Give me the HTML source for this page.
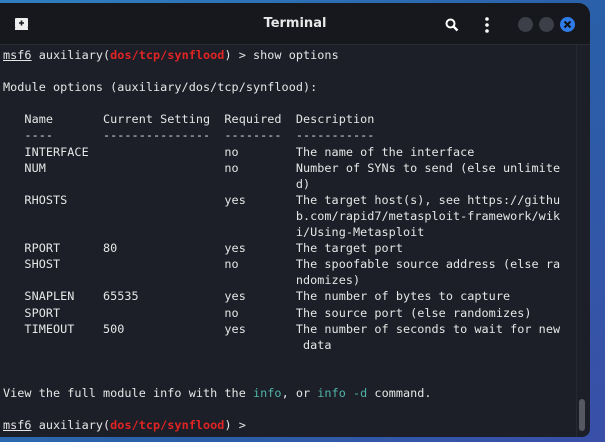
<!DOCTYPE html><html><head><style>
body{margin:0;width:605px;height:442px;overflow:hidden;background:linear-gradient(135deg,#2f7fc0,#2a5fa8 60%,#3a4fa8);font-family:"DejaVu Sans Mono","Liberation Mono",monospace;}
.win{position:absolute;left:0;top:3px;width:590px;height:434px;background:#1c1f28;border-radius:0 12px 8px 0;overflow:hidden}
.tb{position:absolute;left:0;top:0;width:590px;height:41px;background:#17181d;border-bottom:1px solid #2a2c33}
.title{position:absolute;left:0;width:590px;top:13px;text-align:center;color:#e8e8e8;font:600 13px "DejaVu Sans","Liberation Sans",sans-serif}
.dot{position:absolute;top:14px;width:15px;height:15px;border-radius:50%;background:#3d3f48}
pre{position:absolute;left:3px;top:44px;margin:0;color:#e6e6e6;font-size:11.8px;line-height:16.09px;letter-spacing:0.04px;font-family:"DejaVu Sans Mono",monospace}
.r{color:#e02424;font-weight:bold}.c{color:#4fb3a8}u{text-decoration:underline}
.sb{position:absolute;left:579px;top:396px;width:6px;height:32px;border-radius:3px;background:#555860}
.vl{position:absolute;left:576px;top:42px;width:1px;height:392px;background:#262932}
</style></head><body><div class="win">
<div class="tb"><div class="title">Terminal</div>
<svg style="position:absolute;left:15px;top:15px" width="13" height="12" viewBox="0 0 13 12"><rect x="0" y="0" width="13" height="10" rx="1" fill="#eee"/><rect x="0" y="10" width="13" height="2" fill="#eee"/><path d="M6.5 2.5v5M4 5h5" stroke="#17181d" stroke-width="1.6"/></svg>
<svg style="position:absolute;left:445px;top:15px" width="14" height="14" viewBox="0 0 14 14"><circle cx="5.5" cy="5.5" r="4" fill="none" stroke="#fff" stroke-width="2"/><path d="M8.5 8.5l4 4" stroke="#fff" stroke-width="2.4"/></svg>
<svg style="position:absolute;left:485px;top:14px" width="4" height="16"><circle cx="2" cy="2" r="1.8" fill="#fff"/><circle cx="2" cy="8" r="1.8" fill="#fff"/><circle cx="2" cy="14" r="1.8" fill="#fff"/></svg>
<div class="dot" style="left:518px"></div><div class="dot" style="left:539px"></div>
<div class="dot" style="left:560px;background:#2f7ce8"></div>
<svg style="position:absolute;left:563px;top:17px" width="9" height="9"><path d="M1.5 1.5l6 6M7.5 1.5l-6 6" stroke="#111" stroke-width="2"/></svg>
</div>
<div class="vl"></div>
<pre><u>msf6</u> auxiliary(<span class="r">dos/tcp/synflood</span>) &gt; show options

Module options (auxiliary/dos/tcp/synflood):

   Name       Current Setting  Required  Description
   ----       ---------------  --------  -----------
   INTERFACE                   no        The name of the interface
   NUM                         no        Number of SYNs to send (else unlimite
                                         d)
   RHOSTS                      yes       The target host(s), see https://githu
                                         b.com/rapid7/metasploit-framework/wik
                                         i/Using-Metasploit
   RPORT      80               yes       The target port
   SHOST                       no        The spoofable source address (else ra
                                         ndomizes)
   SNAPLEN    65535            yes       The number of bytes to capture
   SPORT                       no        The source port (else randomizes)
   TIMEOUT    500              yes       The number of seconds to wait for new
                                          data


View the full module info with the <span class="c">info</span>, or <span class="c">info -d</span> command.

<u>msf6</u> auxiliary(<span class="r">dos/tcp/synflood</span>) &gt;</pre>
<div class="sb"></div>
</div></body></html>
